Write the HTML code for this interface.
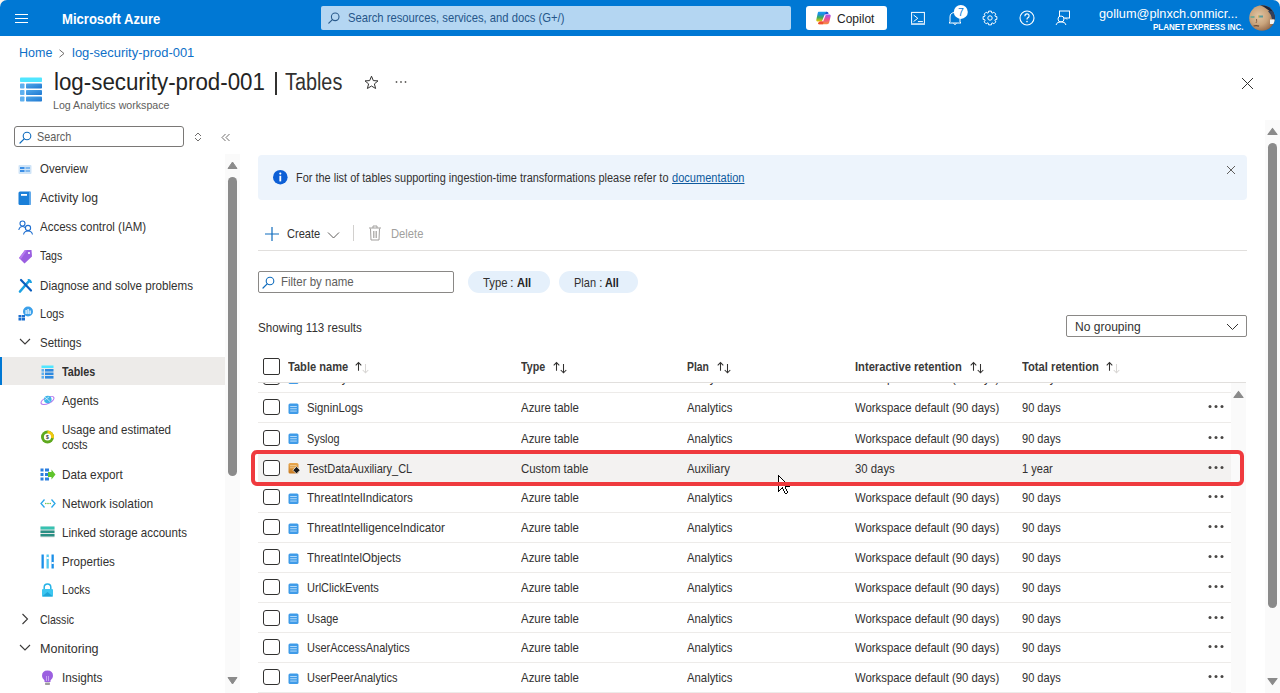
<!DOCTYPE html>
<html><head><meta charset="utf-8"><title>Tables - Microsoft Azure</title>
<style>
html,body{margin:0;padding:0;width:1280px;height:693px;overflow:hidden;background:#fff;}
body{position:relative;font-family:"Liberation Sans",sans-serif;}
.a{position:absolute;display:block;}
.t{position:absolute;white-space:nowrap;font-family:"Liberation Sans",sans-serif;}
svg{overflow:visible;}
</style></head><body>
<div class="a" style="left:0px;top:0px;width:12px;height:12px;background:#fcf6ee;"></div>
<div class="a" style="left:1268px;top:0px;width:12px;height:12px;background:#fcf6ee;"></div>
<div class="a" style="left:0px;top:0px;width:1280px;height:36px;background:#0078d4;border-radius:7px 7px 0 0;"></div>
<div class="a" style="left:15px;top:14px;width:13px;height:1.2px;background:#ffffff;"></div>
<div class="a" style="left:15px;top:18px;width:13px;height:1.2px;background:#ffffff;"></div>
<div class="a" style="left:15px;top:22px;width:13px;height:1.2px;background:#ffffff;"></div>
<div class="t" style="left:61.70px;top:10.15px;font-size:14px;line-height:18px;color:#ffffff;transform:scaleX(0.9338);transform-origin:0 0;font-weight:700;">Microsoft Azure</div>
<div class="a" style="left:321px;top:6px;width:470px;height:24px;background:#b4d6f2;border-radius:2px;"></div>
<svg class="a" style="left:328px;top:12px;" width="12" height="12" viewBox="0 0 12 12"><circle cx="7.2" cy="4.8" r="3.8" fill="none" stroke="#2b5b8c" stroke-width="1.1"/><line x1="4.4" y1="7.6" x2="0.8" y2="11.2" stroke="#2b5b8c" stroke-width="1.2" stroke-linecap="round"/></svg>
<div class="t" style="left:348.00px;top:10.00px;font-size:13px;line-height:16px;color:#26568a;transform:scaleX(0.8644);transform-origin:0 0;">Search resources, services, and docs (G+/)</div>
<div class="a" style="left:806px;top:6px;width:81px;height:24px;background:#ffffff;border-radius:3px;"></div>
<svg class="a" style="left:815px;top:11px;" width="17" height="14" viewBox="0 0 17 14"><defs><linearGradient id="cgL" x1="0" y1="0" x2="0" y2="1"><stop offset="0" stop-color="#1aa3f2"/><stop offset="0.25" stop-color="#1a8de0"/><stop offset="0.6" stop-color="#3fae5a"/><stop offset="1" stop-color="#f1c500"/></linearGradient><linearGradient id="cgR" x1="0" y1="0" x2="0" y2="1"><stop offset="0" stop-color="#a154f2"/><stop offset="0.5" stop-color="#f0508c"/><stop offset="1" stop-color="#f7913c"/></linearGradient></defs><path d="M3.6 0.8 L11.8 0.8 Q13.2 0.8 13.6 2.6 L10.2 3.2 L7.4 10.4 L2.4 10.4 Q1 10.4 1.3 8.8 L2.7 2.2 Q3 0.8 3.6 0.8 Z" fill="url(#cgL)"/><path d="M11.5 0.8 Q13.2 0.8 13.6 2.6 L9.5 3.4 Z" fill="#1b4fd0"/><path d="M9.4 3.5 L14.6 3.5 Q16 3.5 15.7 5 L14.2 11.5 Q13.8 13.2 12.2 13.2 L4.2 13.2 Q2.6 13.2 3.2 12 L4.8 10.4 L7.2 10.4 Z" fill="url(#cgR)"/><path d="M4.2 13.2 Q2.6 13.2 3.2 12 L4.8 10.4 L8.5 10.4 L8 13.2 Z" fill="#ef5030"/><path d="M10.3 3.6 L7.6 10.3" stroke="#fff" stroke-width="1.1"/></svg>
<div class="t" style="left:837.00px;top:11.10px;font-size:13px;line-height:16px;color:#242424;transform:scaleX(0.9242);transform-origin:0 0;">Copilot</div>
<svg class="a" style="left:910px;top:11px;" width="16" height="15" viewBox="0 0 16 15"><rect x="1.6" y="1.4" width="12.8" height="11.8" fill="none" stroke="#fff" stroke-width="1"/><rect x="1.1" y="12.2" width="13.8" height="1.6" fill="#bcdcf5"/><path d="M3.9 4.3 L7.8 7.3 L3.9 10.3" fill="none" stroke="#fff" stroke-width="1" stroke-linecap="round"/><line x1="8.3" y1="10.6" x2="12.5" y2="10.6" stroke="#fff" stroke-width="1" stroke-linecap="round"/></svg>
<svg class="a" style="left:947px;top:10px;" width="16" height="16" viewBox="0 0 16 16"><path d="M3 12 L3 7 Q3 2.5 8 2.5 Q13 2.5 13 7 L13 12 L14 13 L2 13 Z" fill="none" stroke="#fff" stroke-width="1"/><path d="M6.5 13.5 Q8 15.5 9.5 13.5" fill="none" stroke="#fff" stroke-width="1"/></svg>
<svg class="a" style="left:953px;top:4px;" width="16" height="16" viewBox="0 0 16 16"><circle cx="7.8" cy="7.9" r="7" fill="#fff"/><text x="7.8" y="11.8" text-anchor="middle" font-family="Liberation Sans" font-size="10.5" fill="#0078d4">7</text></svg>
<svg class="a" style="left:982px;top:10px;" width="16" height="16" viewBox="0 0 16 16"><path d="M12.96 6.13 L14.86 6.61 L14.86 9.39 L12.96 9.87 L12.83 10.19 L13.83 11.87 L11.87 13.83 L10.19 12.83 L9.87 12.96 L9.39 14.86 L6.61 14.86 L6.13 12.96 L5.81 12.83 L4.13 13.83 L2.17 11.87 L3.17 10.19 L3.04 9.87 L1.14 9.39 L1.14 6.61 L3.04 6.13 L3.17 5.81 L2.17 4.13 L4.13 2.17 L5.81 3.17 L6.13 3.04 L6.61 1.14 L9.39 1.14 L9.87 3.04 L10.19 3.17 L11.87 2.17 L13.83 4.13 L12.83 5.81 Z" fill="none" stroke="#fff" stroke-width="1" stroke-linejoin="round"/><circle cx="8" cy="8" r="2.2" fill="none" stroke="#fff" stroke-width="1"/></svg>
<svg class="a" style="left:1019px;top:10px;" width="16" height="16" viewBox="0 0 16 16"><circle cx="8" cy="8" r="7" fill="none" stroke="#fff" stroke-width="1.1"/><path d="M5.9 6.2 Q5.9 3.9 8 3.9 Q10.1 3.9 10.1 5.9 Q10.1 7.1 8.6 7.9 Q8 8.3 8 9.4" fill="none" stroke="#fff" stroke-width="1.1"/><circle cx="8" cy="11.6" r="0.8" fill="#fff"/></svg>
<svg class="a" style="left:1055px;top:10px;" width="16" height="16" viewBox="0 0 16 16"><rect x="4.5" y="1" width="10" height="7" fill="none" stroke="#fff" stroke-width="1"/><circle cx="6" cy="9" r="3" fill="#0078d4" stroke="#fff" stroke-width="1"/><path d="M1 15 Q1.5 11.8 6 11.8 Q10.5 11.8 11 15" fill="none" stroke="#fff" stroke-width="1"/><path d="M10.5 8 L12 9.5" stroke="#fff" stroke-width="1"/></svg>
<div class="t" style="left:1098.90px;top:6.07px;font-size:12.5px;line-height:16px;color:#ffffff;transform:scaleX(1.0180);transform-origin:0 0;">gollum@plnxch.onmicr...</div>
<div class="t" style="left:1153.00px;top:22.38px;font-size:9px;line-height:11px;color:#ffffff;transform:scaleX(0.8924);transform-origin:0 0;font-weight:700;">PLANET EXPRESS INC.</div>
<svg class="a" style="left:1249px;top:5px;" width="26" height="26" viewBox="0 0 26 26"><defs><clipPath id="avc"><circle cx="13" cy="13" r="12.8"/></clipPath><radialGradient id="av" cx="0.38" cy="0.42" r="0.7"><stop offset="0" stop-color="#e2c6a4"/><stop offset="0.5" stop-color="#c9a47c"/><stop offset="0.85" stop-color="#9a7050"/><stop offset="1" stop-color="#4a3424"/></radialGradient></defs><g clip-path="url(#avc)"><rect x="0" y="0" width="26" height="26" fill="url(#av)"/><path d="M11 0 L26 0 L26 17 Q24 10 20 5.5 Q16 2 11 0 Z" fill="#1e2438"/><path d="M19 6 Q22 9 23 14 L26 14 L26 6 Z" fill="#33405a"/><rect x="21" y="14.5" width="5" height="4.5" fill="#eef4f6"/><path d="M0 20 Q3 25 8 26 L0 26 Z" fill="#2a2430"/><rect x="1.5" y="11" width="4" height="2" fill="#78a890"/><rect x="9.5" y="10.5" width="4.5" height="2" fill="#5a9a98"/><rect x="9.3" y="10.5" width="1" height="2" fill="#e8b040"/><path d="M4.5 21 Q7.5 20 10 21.2" stroke="#6a4a34" stroke-width="1.3" fill="none"/><path d="M7.5 14 Q8 17 7 18" stroke="#8a6448" stroke-width="1" fill="none"/></g></svg>
<div class="t" style="left:18.50px;top:45.10px;font-size:13px;line-height:16px;color:#0e6fc7;transform:scaleX(0.9632);transform-origin:0 0;">Home</div>
<svg class="a" style="left:58px;top:49px;" width="8" height="9" viewBox="0 0 8 9"><path d="M1.5 0.8 L6 4.5 L1.5 8.2" fill="none" stroke="#605e5c" stroke-width="0.9"/></svg>
<div class="t" style="left:72.10px;top:45.10px;font-size:13px;line-height:16px;color:#0e6fc7;transform:scaleX(0.9957);transform-origin:0 0;">log-security-prod-001</div>
<svg class="a" style="left:19px;top:77px;" width="24" height="25" viewBox="0 0 24 25"><defs><linearGradient id="tg" x1="0" y1="0" x2="1" y2="1"><stop offset="0" stop-color="#4fa8ea"/><stop offset="1" stop-color="#1f78d1"/></linearGradient></defs><rect x="1" y="0.5" width="22" height="4.5" rx="0.8" fill="#50e6ff"/><rect x="1" y="6.5" width="4.5" height="5" rx="0.8" fill="#5eb0ef"/><rect x="7" y="6.5" width="16" height="5" rx="0.8" fill="url(#tg)"/><rect x="1" y="13" width="4.5" height="5" rx="0.8" fill="#5eb0ef"/><rect x="7" y="13" width="16" height="5" rx="0.8" fill="url(#tg)"/><rect x="1" y="19.5" width="4.5" height="5" rx="0.8" fill="#5eb0ef"/><rect x="7" y="19.5" width="16" height="5" rx="0.8" fill="url(#tg)"/></svg>
<div class="t" style="left:53.60px;top:66.83px;font-size:23px;line-height:30px;color:#242424;transform:scaleX(0.9705);transform-origin:0 0;">log-security-prod-001</div>
<div class="a" style="left:275px;top:72px;width:1.6px;height:22.5px;background:#323130;"></div>
<div class="t" style="left:285.00px;top:66.83px;font-size:23px;line-height:30px;color:#323130;transform:scaleX(0.8619);transform-origin:0 0;">Tables</div>
<div class="t" style="left:52.60px;top:97.59px;font-size:11px;line-height:14px;color:#605e5c;transform:scaleX(0.9672);transform-origin:0 0;">Log Analytics workspace</div>
<svg class="a" style="left:364px;top:75px;" width="15" height="15" viewBox="0 0 15 15"><path d="M7.5 1.2 L9.3 5.6 L14 5.9 L10.4 8.9 L11.6 13.5 L7.5 11 L3.4 13.5 L4.6 8.9 L1 5.9 L5.7 5.6 Z" fill="none" stroke="#323130" stroke-width="1" stroke-linejoin="round"/></svg>
<svg class="a" style="left:395px;top:80px;" width="12" height="4" viewBox="0 0 12 4"><circle cx="1.5" cy="2" r="0.9" fill="#605e5c"/><circle cx="6" cy="2" r="0.9" fill="#605e5c"/><circle cx="10.5" cy="2" r="0.9" fill="#605e5c"/></svg>
<svg class="a" style="left:1241px;top:76.5px;" width="13" height="13" viewBox="0 0 13 13"><path d="M1 1 L12 12 M12 1 L1 12" stroke="#323130" stroke-width="1"/></svg>
<div class="a" style="left:14.3px;top:126.3px;width:169.3px;height:21px;background:#fff;border:1px solid #7a7876;border-radius:3px;box-sizing:border-box;"></div>
<svg class="a" style="left:19px;top:131px;" width="13" height="13" viewBox="0 0 13 13"><circle cx="8" cy="5" r="3.8" fill="none" stroke="#0f6cbd" stroke-width="1.1"/><line x1="5.2" y1="7.8" x2="1" y2="12" stroke="#0f6cbd" stroke-width="1.2" stroke-linecap="round"/></svg>
<div class="t" style="left:37.10px;top:128.90px;font-size:13px;line-height:16px;color:#605e5c;transform:scaleX(0.8327);transform-origin:0 0;">Search</div>
<svg class="a" style="left:194px;top:132px;" width="8" height="10" viewBox="0 0 8 10"><path d="M1 4 L4 1 L7 4 M1 6 L4 9 L7 6" fill="none" stroke="#605e5c" stroke-width="0.9"/></svg>
<svg class="a" style="left:221px;top:133px;" width="10" height="9" viewBox="0 0 10 9"><path d="M4.5 1 L1 4.5 L4.5 8 M8.5 1 L5 4.5 L8.5 8" fill="none" stroke="#605e5c" stroke-width="0.9"/></svg>
<div class="a" style="left:0px;top:357px;width:225px;height:28px;background:#edebe9;"></div>
<div class="a" style="left:0px;top:357px;width:2px;height:28px;background:#0078d4;"></div>
<div class="t" style="left:39.70px;top:161.30px;font-size:13px;line-height:16px;color:#323130;transform:scaleX(0.8805);transform-origin:0 0;">Overview</div>
<div class="t" style="left:39.70px;top:190.00px;font-size:13px;line-height:16px;color:#323130;transform:scaleX(0.9335);transform-origin:0 0;">Activity log</div>
<div class="t" style="left:39.70px;top:219.20px;font-size:13px;line-height:16px;color:#323130;transform:scaleX(0.8857);transform-origin:0 0;">Access control (IAM)</div>
<div class="t" style="left:39.70px;top:248.30px;font-size:13px;line-height:16px;color:#323130;transform:scaleX(0.8085);transform-origin:0 0;">Tags</div>
<div class="t" style="left:39.70px;top:278.10px;font-size:13px;line-height:16px;color:#323130;transform:scaleX(0.8934);transform-origin:0 0;">Diagnose and solve problems</div>
<div class="t" style="left:39.70px;top:305.80px;font-size:13px;line-height:16px;color:#323130;transform:scaleX(0.8478);transform-origin:0 0;">Logs</div>
<div class="t" style="left:39.70px;top:335.40px;font-size:13px;line-height:16px;color:#323130;transform:scaleX(0.8814);transform-origin:0 0;">Settings</div>
<div class="t" style="left:61.70px;top:363.60px;font-size:13px;line-height:16px;color:#323130;transform:scaleX(0.8280);transform-origin:0 0;font-weight:700;">Tables</div>
<div class="t" style="left:61.70px;top:392.90px;font-size:13px;line-height:16px;color:#323130;transform:scaleX(0.9068);transform-origin:0 0;">Agents</div>
<div class="t" style="left:61.70px;top:421.60px;font-size:13px;line-height:16px;color:#323130;transform:scaleX(0.8873);transform-origin:0 0;">Usage and estimated</div>
<div class="t" style="left:61.70px;top:437.30px;font-size:13px;line-height:16px;color:#323130;transform:scaleX(0.8437);transform-origin:0 0;">costs</div>
<div class="t" style="left:61.70px;top:467.00px;font-size:13px;line-height:16px;color:#323130;transform:scaleX(0.9048);transform-origin:0 0;">Data export</div>
<div class="t" style="left:61.70px;top:495.90px;font-size:13px;line-height:16px;color:#323130;transform:scaleX(0.9214);transform-origin:0 0;">Network isolation</div>
<div class="t" style="left:61.70px;top:524.50px;font-size:13px;line-height:16px;color:#323130;transform:scaleX(0.8863);transform-origin:0 0;">Linked storage accounts</div>
<div class="t" style="left:61.70px;top:553.60px;font-size:13px;line-height:16px;color:#323130;transform:scaleX(0.8929);transform-origin:0 0;">Properties</div>
<div class="t" style="left:61.70px;top:581.60px;font-size:13px;line-height:16px;color:#323130;transform:scaleX(0.8245);transform-origin:0 0;">Locks</div>
<div class="t" style="left:39.70px;top:611.90px;font-size:13px;line-height:16px;color:#323130;transform:scaleX(0.8116);transform-origin:0 0;">Classic</div>
<div class="t" style="left:39.70px;top:640.80px;font-size:13px;line-height:16px;color:#323130;transform:scaleX(0.9655);transform-origin:0 0;">Monitoring</div>
<div class="t" style="left:61.70px;top:669.50px;font-size:13px;line-height:16px;color:#323130;transform:scaleX(0.9040);transform-origin:0 0;">Insights</div>
<svg class="a" style="left:18px;top:164px;" width="14" height="11" viewBox="0 0 14 11"><rect x="0.5" y="1" width="13" height="9" rx="1" fill="#cfe4f7"/><rect x="2" y="3" width="4.5" height="2" fill="#3a8ee6"/><rect x="2" y="6" width="4.5" height="2" fill="#3a8ee6"/><rect x="7.5" y="3" width="4.5" height="2" fill="#7fb8ef"/><rect x="7.5" y="6" width="4.5" height="2" fill="#7fb8ef"/></svg>
<svg class="a" style="left:18px;top:191px;" width="14" height="15" viewBox="0 0 14 15"><rect x="0.5" y="0.5" width="12" height="13.5" rx="1.5" fill="#1a7fd8"/><rect x="3" y="3" width="6" height="1.8" fill="#fff"/><rect x="11" y="0.5" width="1.8" height="13.5" fill="#5aa6ea"/></svg>
<svg class="a" style="left:18px;top:220px;" width="16" height="15" viewBox="0 0 16 15"><circle cx="4.5" cy="3.5" r="2.5" fill="none" stroke="#1f6fd0" stroke-width="1.1"/><path d="M0.8 10 Q1.5 6.5 4.5 6.5 Q6 6.5 7 7.5" fill="none" stroke="#1f6fd0" stroke-width="1.1"/><circle cx="10" cy="8" r="2.6" fill="none" stroke="#1f6fd0" stroke-width="1.1"/><path d="M5.5 14.5 Q6.2 11 10 11 Q13.8 11 14.5 14.5" fill="none" stroke="#1f6fd0" stroke-width="1.1"/></svg>
<svg class="a" style="left:18px;top:249px;" width="15" height="15" viewBox="0 0 15 15"><path d="M7 1 L13.5 1 L14 7.5 L6.5 14.5 L1 9 Z" fill="#9a5ee0"/><path d="M1 9 L7 1 L9 1 L3 10 Z" fill="#b77af0"/><circle cx="11" cy="4" r="1.1" fill="#fff"/></svg>
<svg class="a" style="left:18px;top:278px;" width="15" height="15" viewBox="0 0 15 15"><path d="M2 13.5 L11 3" stroke="#1ba1e2" stroke-width="2.6" stroke-linecap="round"/><path d="M3 2 L13 12.5" stroke="#0a5dbd" stroke-width="2.2" stroke-linecap="round"/><path d="M9.5 1 Q13.5 0.5 14 5 L12 5 L10.5 3.5 Z" fill="#1ba1e2"/></svg>
<svg class="a" style="left:18px;top:306px;" width="15" height="15" viewBox="0 0 15 15"><circle cx="10" cy="5.5" r="5" fill="#3ba0ea"/><rect x="7.5" y="4" width="1.2" height="4" fill="#fff"/><rect x="9.5" y="3" width="1.2" height="5" fill="#fff"/><rect x="11.5" y="4.5" width="1.2" height="3.5" fill="#fff"/><rect x="0.5" y="9" width="3" height="2.5" fill="#1b6fd0"/><rect x="4" y="9" width="3" height="2.5" fill="#1b6fd0"/><rect x="0.5" y="12" width="3" height="2.5" fill="#1b6fd0"/><rect x="4" y="12" width="3" height="2.5" fill="#1b6fd0"/></svg>
<svg class="a" style="left:19px;top:338px;" width="12" height="8" viewBox="0 0 12 8"><path d="M1 1 L6 6 L11 1" fill="none" stroke="#3b3a39" stroke-width="1.1"/></svg>
<svg class="a" style="left:41px;top:365px;" width="13" height="14" viewBox="0 0 13 14"><rect x="0.5" y="0.5" width="12" height="2.5" fill="#50e6ff"/><rect x="0.5" y="4" width="2.5" height="2.6" fill="#5eb0ef"/><rect x="4" y="4" width="8.5" height="2.6" fill="#2f8ae0"/><rect x="0.5" y="7.5" width="2.5" height="2.6" fill="#5eb0ef"/><rect x="4" y="7.5" width="8.5" height="2.6" fill="#2f8ae0"/><rect x="0.5" y="11" width="2.5" height="2.6" fill="#5eb0ef"/><rect x="4" y="11" width="8.5" height="2.6" fill="#2f8ae0"/></svg>
<svg class="a" style="left:40px;top:393px;" width="15" height="14" viewBox="0 0 15 14"><ellipse cx="7.5" cy="7.5" rx="7" ry="3" fill="none" stroke="#b77af0" stroke-width="1.2" transform="rotate(-25 7.5 7.5)"/><circle cx="7.8" cy="6.5" r="3.8" fill="#3fb5e8"/><path d="M5 4 L10.5 9 M4.5 7 L9 4" stroke="#fff" stroke-width="0.6"/></svg>
<svg class="a" style="left:40px;top:429px;" width="15" height="16" viewBox="0 0 15 16"><circle cx="7.5" cy="8" r="6.5" fill="#5ea91e"/><path d="M7.5 1.5 A6.5 6.5 0 0 1 13.8 9.5 L7.5 8 Z" fill="#f2c80f"/><circle cx="7.5" cy="8" r="3.6" fill="#fff"/><text x="7.5" y="10" text-anchor="middle" font-family="Liberation Sans" font-size="5" font-weight="700" fill="#333">$</text></svg>
<svg class="a" style="left:40px;top:468px;" width="16" height="13" viewBox="0 0 16 13"><rect x="0.5" y="0.5" width="3" height="3" fill="#2b7fe0"/><rect x="5" y="0.5" width="4" height="3" fill="#2b7fe0"/><rect x="0.5" y="5" width="3" height="3" fill="#2b7fe0"/><rect x="5" y="5" width="4" height="3" fill="#2b7fe0"/><rect x="0.5" y="9.5" width="3" height="3" fill="#2b7fe0"/><rect x="5" y="9.5" width="4" height="3" fill="#2b7fe0"/><path d="M8 4 L11.5 4 L11.5 1.5 L15.5 6.5 L11.5 11.5 L11.5 9 L8 9 Z" fill="#5fc42b"/></svg>
<svg class="a" style="left:40px;top:498px;" width="16" height="11" viewBox="0 0 16 11"><path d="M4.5 1.5 L1 5.5 L4.5 9.5" fill="none" stroke="#2aa7e8" stroke-width="1.3"/><path d="M11.5 1.5 L15 5.5 L11.5 9.5" fill="none" stroke="#2aa7e8" stroke-width="1.3"/><circle cx="5.8" cy="5.5" r="0.8" fill="#6cc04a"/><circle cx="8" cy="5.5" r="0.8" fill="#6cc04a"/><circle cx="10.2" cy="5.5" r="0.8" fill="#6cc04a"/></svg>
<svg class="a" style="left:40px;top:526px;" width="15" height="12" viewBox="0 0 15 12"><rect x="0.5" y="0.5" width="14" height="11" fill="#e6e6e6"/><rect x="0.5" y="0.5" width="14" height="3" fill="#37c2b1"/><rect x="0.5" y="4.5" width="14" height="2.5" fill="#2a8f84"/><rect x="0.5" y="8" width="14" height="2.5" fill="#2a8f84"/></svg>
<svg class="a" style="left:41px;top:554px;" width="14" height="15" viewBox="0 0 14 15"><rect x="0.5" y="0.5" width="2.3" height="14" fill="#1b8fe8"/><rect x="5.5" y="0.5" width="2.3" height="14" fill="#50c8f0"/><rect x="10.5" y="0.5" width="2.3" height="14" fill="#1b8fe8"/><rect x="5.5" y="3" width="2.3" height="2" fill="#fff"/><rect x="10.5" y="8" width="2.3" height="2" fill="#fff"/></svg>
<svg class="a" style="left:41px;top:583px;" width="13" height="14" viewBox="0 0 13 14"><path d="M3.2 6 L3.2 4.3 Q3.2 1 6.5 1 Q9.8 1 9.8 4.3 L9.8 6" fill="none" stroke="#25b2e6" stroke-width="1.5"/><rect x="1" y="6" width="11" height="7.5" rx="1" fill="#3cc6f0"/><path d="M1 13.5 L6.5 9 L12 13.5 Z" fill="#1ea5d8"/></svg>
<svg class="a" style="left:21px;top:613px;" width="8" height="12" viewBox="0 0 8 12"><path d="M1.5 1 L6.5 6 L1.5 11" fill="none" stroke="#3b3a39" stroke-width="1.1"/></svg>
<svg class="a" style="left:19px;top:644px;" width="12" height="8" viewBox="0 0 12 8"><path d="M1 1 L6 6 L11 1" fill="none" stroke="#3b3a39" stroke-width="1.1"/></svg>
<svg class="a" style="left:41px;top:670px;" width="13" height="16" viewBox="0 0 13 16"><path d="M6.5 0.5 Q12 0.5 12 6 Q12 8.5 9.5 10.5 L9.5 12 L3.5 12 L3.5 10.5 Q1 8.5 1 6 Q1 0.5 6.5 0.5 Z" fill="#9b5fe0"/><rect x="4" y="12.5" width="5" height="2.5" rx="0.8" fill="#9e9e9e"/><path d="M5.5 11 L5.5 6 M7.5 11 L7.5 6" stroke="#d8c0f8" stroke-width="0.7"/></svg>
<div class="a" style="left:225px;top:154px;width:15px;height:539px;background:#fafafa;"></div>
<svg class="a" style="left:227px;top:161px;" width="11" height="8" viewBox="0 0 11 8"><path d="M1 7.5 L5.5 1 L10 7.5 Z" fill="#8a8a8a" stroke="#8a8a8a" stroke-width="1" stroke-linejoin="round"/></svg>
<div class="a" style="left:228px;top:177px;width:9px;height:299px;background:#8a8a8a;border-radius:4.5px;"></div>
<svg class="a" style="left:227px;top:677px;" width="11" height="8" viewBox="0 0 11 8"><path d="M1 0.5 L5.5 7 L10 0.5 Z" fill="#8a8a8a" stroke="#8a8a8a" stroke-width="1" stroke-linejoin="round"/></svg>
<div class="a" style="left:258px;top:155px;width:989px;height:44.5px;background:#edf4fc;border-radius:4px;"></div>
<svg class="a" style="left:272px;top:169px;" width="16" height="16" viewBox="0 0 16 16"><circle cx="8.3" cy="8.2" r="7.3" fill="#0d5fd6"/><rect x="7.4" y="6.8" width="1.8" height="5.6" fill="#fff"/><circle cx="8.3" cy="4.6" r="1.1" fill="#fff"/></svg>
<div class="t" style="left:295.60px;top:170.74px;font-size:12px;line-height:15px;color:#323130;transform:scaleX(0.9125);transform-origin:0 0;">For the list of tables supporting ingestion-time transformations please refer to</div>
<div class="t" style="left:671.50px;top:170.74px;font-size:12px;line-height:15px;color:#0e5a9e;transform:scaleX(0.9209);transform-origin:0 0;text-decoration:underline;">documentation</div>
<svg class="a" style="left:1226px;top:165px;" width="10" height="10" viewBox="0 0 10 10"><path d="M1 1 L9 9 M9 1 L1 9" stroke="#605e5c" stroke-width="1"/></svg>
<svg class="a" style="left:264px;top:226px;" width="16" height="16" viewBox="0 0 16 16"><path d="M8 1 L8 15 M1 8 L15 8" stroke="#0f6cbd" stroke-width="1.2"/></svg>
<div class="t" style="left:287.30px;top:226.40px;font-size:13px;line-height:16px;color:#323130;transform:scaleX(0.8509);transform-origin:0 0;">Create</div>
<svg class="a" style="left:327px;top:231px;" width="13" height="9" viewBox="0 0 13 9"><path d="M1 1.5 L6.5 7 L12 1.5" fill="none" stroke="#605e5c" stroke-width="1"/></svg>
<div class="a" style="left:353px;top:225px;width:1px;height:16px;background:#d2d0ce;"></div>
<svg class="a" style="left:368px;top:225px;" width="14" height="16" viewBox="0 0 14 16"><path d="M1 3 L13 3 M5 3 L5 1 L9 1 L9 3" fill="none" stroke="#a19f9d" stroke-width="1"/><path d="M2.5 3.5 L3 15 L11 15 L11.5 3.5" fill="none" stroke="#a19f9d" stroke-width="1"/><path d="M5.5 6 L5.5 13 M7 6 L7 13 M8.5 6 L8.5 13" stroke="#a19f9d" stroke-width="0.8"/></svg>
<div class="t" style="left:390.70px;top:226.40px;font-size:13px;line-height:16px;color:#a19f9d;transform:scaleX(0.8622);transform-origin:0 0;">Delete</div>
<div class="a" style="left:258px;top:250px;width:989px;height:1px;background:#e1dfdd;"></div>
<div class="a" style="left:258px;top:271px;width:196px;height:22px;background:#fff;border:1px solid #8a8886;border-radius:2px;box-sizing:border-box;"></div>
<svg class="a" style="left:262px;top:276px;" width="13" height="13" viewBox="0 0 13 13"><circle cx="8" cy="5" r="3.8" fill="none" stroke="#0f6cbd" stroke-width="1.1"/><line x1="5.2" y1="7.8" x2="1" y2="12" stroke="#0f6cbd" stroke-width="1.2" stroke-linecap="round"/></svg>
<div class="t" style="left:281.30px;top:273.70px;font-size:13px;line-height:16px;color:#605e5c;transform:scaleX(0.8827);transform-origin:0 0;">Filter by name</div>
<div class="a" style="left:468px;top:271px;width:82px;height:22px;background:#e5f0fb;border-radius:11px;"></div>
<div class="t" style="left:483.10px;top:274.80px;font-size:13px;line-height:16px;color:#323130;transform:scaleX(0.8693);transform-origin:0 0;">Type</div>
<div class="t" style="left:510.00px;top:274.80px;font-size:13px;line-height:16px;color:#323130;transform:scaleX(0.9968);transform-origin:0 0;">:</div>
<div class="t" style="left:517.00px;top:274.80px;font-size:13px;line-height:16px;color:#242424;transform:scaleX(0.8488);transform-origin:0 0;font-weight:700;">All</div>
<div class="a" style="left:559px;top:271px;width:79px;height:22px;background:#e5f0fb;border-radius:11px;"></div>
<div class="t" style="left:574.20px;top:274.80px;font-size:13px;line-height:16px;color:#323130;transform:scaleX(0.8455);transform-origin:0 0;">Plan</div>
<div class="t" style="left:598.50px;top:274.80px;font-size:13px;line-height:16px;color:#323130;transform:scaleX(0.9968);transform-origin:0 0;">:</div>
<div class="t" style="left:605.20px;top:274.80px;font-size:13px;line-height:16px;color:#242424;transform:scaleX(0.8307);transform-origin:0 0;font-weight:700;">All</div>
<div class="t" style="left:257.80px;top:320.00px;font-size:13px;line-height:16px;color:#323130;transform:scaleX(0.8940);transform-origin:0 0;">Showing 113 results</div>
<div class="a" style="left:1066px;top:315px;width:181px;height:22px;background:#fff;border:1px solid #8a8886;border-radius:2px;box-sizing:border-box;"></div>
<div class="t" style="left:1074.60px;top:319.00px;font-size:13px;line-height:16px;color:#323130;transform:scaleX(0.9262);transform-origin:0 0;">No grouping</div>
<svg class="a" style="left:1226px;top:323px;" width="13" height="8" viewBox="0 0 13 8"><path d="M1 1 L6.5 6.5 L12 1" fill="none" stroke="#323130" stroke-width="1"/></svg>
<div class="a" style="left:263.3px;top:358.1px;width:16.4px;height:16.6px;background:#fff;border:1px solid #323130;border-radius:2px;box-sizing:border-box;"></div>
<div class="t" style="left:287.50px;top:358.70px;font-size:13px;line-height:16px;color:#3a3938;transform:scaleX(0.8532);transform-origin:0 0;font-weight:700;">Table name</div>
<svg class="a" style="left:354.5px;top:362px;" width="16" height="12" viewBox="0 0 16 12"><path d="M3.5 8.8 L3.5 0.6 M0.7 3.4 L3.5 0.6 L6.3 3.4" fill="none" stroke="#323130" stroke-width="1.05"/><path d="M10.5 2 L10.5 10.8 M7.7 8 L10.5 10.8 L13.3 8" fill="none" stroke="#d8d6d4" stroke-width="1.05"/></svg>
<div class="t" style="left:520.90px;top:358.70px;font-size:13px;line-height:16px;color:#3a3938;transform:scaleX(0.8238);transform-origin:0 0;font-weight:700;">Type</div>
<svg class="a" style="left:553px;top:362px;" width="16" height="12" viewBox="0 0 16 12"><path d="M3.5 8.8 L3.5 0.6 M0.7 3.4 L3.5 0.6 L6.3 3.4" fill="none" stroke="#323130" stroke-width="1.05"/><path d="M10.5 2 L10.5 10.8 M7.7 8 L10.5 10.8 L13.3 8" fill="none" stroke="#323130" stroke-width="1.05"/></svg>
<div class="t" style="left:687.30px;top:358.70px;font-size:13px;line-height:16px;color:#3a3938;transform:scaleX(0.7977);transform-origin:0 0;font-weight:700;">Plan</div>
<svg class="a" style="left:717px;top:362px;" width="16" height="12" viewBox="0 0 16 12"><path d="M3.5 8.8 L3.5 0.6 M0.7 3.4 L3.5 0.6 L6.3 3.4" fill="none" stroke="#323130" stroke-width="1.05"/><path d="M10.5 2 L10.5 10.8 M7.7 8 L10.5 10.8 L13.3 8" fill="none" stroke="#323130" stroke-width="1.05"/></svg>
<div class="t" style="left:855.20px;top:358.70px;font-size:13px;line-height:16px;color:#3a3938;transform:scaleX(0.8587);transform-origin:0 0;font-weight:700;">Interactive retention</div>
<svg class="a" style="left:970px;top:362px;" width="16" height="12" viewBox="0 0 16 12"><path d="M3.5 8.8 L3.5 0.6 M0.7 3.4 L3.5 0.6 L6.3 3.4" fill="none" stroke="#323130" stroke-width="1.05"/><path d="M10.5 2 L10.5 10.8 M7.7 8 L10.5 10.8 L13.3 8" fill="none" stroke="#323130" stroke-width="1.05"/></svg>
<div class="t" style="left:1021.60px;top:358.70px;font-size:13px;line-height:16px;color:#3a3938;transform:scaleX(0.8611);transform-origin:0 0;font-weight:700;">Total retention</div>
<svg class="a" style="left:1105.5px;top:362px;" width="16" height="12" viewBox="0 0 16 12"><path d="M3.5 8.8 L3.5 0.6 M0.7 3.4 L3.5 0.6 L6.3 3.4" fill="none" stroke="#323130" stroke-width="1.05"/><path d="M10.5 2 L10.5 10.8 M7.7 8 L10.5 10.8 L13.3 8" fill="none" stroke="#d8d6d4" stroke-width="1.05"/></svg>
<div class="a" style="left:258px;top:383px;width:988px;height:310px;overflow:hidden;">
<div class="a" style="left:0px;top:9.0px;width:973px;height:1px;background:#edebe9;"></div>
<div class="a" style="left:5.1px;top:-14.1px;width:16.8px;height:16px;background:#fff;border:1px solid #323130;border-radius:3px;box-sizing:border-box;"></div>
<svg class="a" style="left:30px;top:-10.5px;" width="11" height="11" viewBox="0 0 11 11"><rect x="0.5" y="0.5" width="10" height="10.5" rx="1.5" fill="#3f9be8"/><rect x="2.2" y="3" width="6.6" height="0.9" fill="#bfe0fb"/><rect x="2.2" y="5.3" width="6.6" height="0.9" fill="#bfe0fb"/><rect x="2.2" y="7.6" width="6.6" height="0.9" fill="#bfe0fb"/></svg>
<div class="t" style="left:48.50px;top:-13.10px;font-size:13px;line-height:16px;color:#323130;transform:scaleX(0.8600);transform-origin:0 0;">SecurityEvent</div>
<div class="t" style="left:262.90px;top:-13.10px;font-size:13px;line-height:16px;color:#323130;transform:scaleX(0.8800);transform-origin:0 0;">Azure table</div>
<div class="t" style="left:429.30px;top:-13.10px;font-size:13px;line-height:16px;color:#323130;transform:scaleX(0.8720);transform-origin:0 0;">Analytics</div>
<div class="t" style="left:597.20px;top:-13.10px;font-size:13px;line-height:16px;color:#323130;transform:scaleX(0.8730);transform-origin:0 0;">Workspace default (90 days)</div>
<div class="t" style="left:763.60px;top:-13.10px;font-size:13px;line-height:16px;color:#323130;transform:scaleX(0.8500);transform-origin:0 0;">90 days</div>
<svg class="a" style="left:950px;top:-8.7px;" width="16" height="5" viewBox="0 0 16 5"><circle cx="2" cy="2.5" r="1.5" fill="#484644"/><circle cx="8" cy="2.5" r="1.5" fill="#484644"/><circle cx="14" cy="2.5" r="1.5" fill="#484644"/></svg>
<div class="a" style="left:0px;top:39.0px;width:973px;height:1px;background:#edebe9;"></div>
<div class="a" style="left:5.1px;top:15.9px;width:16.8px;height:16px;background:#fff;border:1px solid #323130;border-radius:3px;box-sizing:border-box;"></div>
<svg class="a" style="left:30px;top:19.5px;" width="11" height="11" viewBox="0 0 11 11"><rect x="0.5" y="0.5" width="10" height="10.5" rx="1.5" fill="#3f9be8"/><rect x="2.2" y="3" width="6.6" height="0.9" fill="#bfe0fb"/><rect x="2.2" y="5.3" width="6.6" height="0.9" fill="#bfe0fb"/><rect x="2.2" y="7.6" width="6.6" height="0.9" fill="#bfe0fb"/></svg>
<div class="t" style="left:48.50px;top:16.90px;font-size:13px;line-height:16px;color:#323130;transform:scaleX(0.8706);transform-origin:0 0;">SigninLogs</div>
<div class="t" style="left:262.90px;top:16.90px;font-size:13px;line-height:16px;color:#323130;transform:scaleX(0.8800);transform-origin:0 0;">Azure table</div>
<div class="t" style="left:429.30px;top:16.90px;font-size:13px;line-height:16px;color:#323130;transform:scaleX(0.8720);transform-origin:0 0;">Analytics</div>
<div class="t" style="left:597.20px;top:16.90px;font-size:13px;line-height:16px;color:#323130;transform:scaleX(0.8730);transform-origin:0 0;">Workspace default (90 days)</div>
<div class="t" style="left:763.60px;top:16.90px;font-size:13px;line-height:16px;color:#323130;transform:scaleX(0.8500);transform-origin:0 0;">90 days</div>
<svg class="a" style="left:950px;top:21.3px;" width="16" height="5" viewBox="0 0 16 5"><circle cx="2" cy="2.5" r="1.5" fill="#484644"/><circle cx="8" cy="2.5" r="1.5" fill="#484644"/><circle cx="14" cy="2.5" r="1.5" fill="#484644"/></svg>
<div class="a" style="left:0px;top:69.0px;width:973px;height:1px;background:#edebe9;"></div>
<div class="a" style="left:5.1px;top:46.6px;width:16.8px;height:16px;background:#fff;border:1px solid #323130;border-radius:3px;box-sizing:border-box;"></div>
<svg class="a" style="left:30px;top:50.2px;" width="11" height="11" viewBox="0 0 11 11"><rect x="0.5" y="0.5" width="10" height="10.5" rx="1.5" fill="#3f9be8"/><rect x="2.2" y="3" width="6.6" height="0.9" fill="#bfe0fb"/><rect x="2.2" y="5.3" width="6.6" height="0.9" fill="#bfe0fb"/><rect x="2.2" y="7.6" width="6.6" height="0.9" fill="#bfe0fb"/></svg>
<div class="t" style="left:48.50px;top:47.60px;font-size:13px;line-height:16px;color:#323130;transform:scaleX(0.8329);transform-origin:0 0;">Syslog</div>
<div class="t" style="left:262.90px;top:47.60px;font-size:13px;line-height:16px;color:#323130;transform:scaleX(0.8800);transform-origin:0 0;">Azure table</div>
<div class="t" style="left:429.30px;top:47.60px;font-size:13px;line-height:16px;color:#323130;transform:scaleX(0.8720);transform-origin:0 0;">Analytics</div>
<div class="t" style="left:597.20px;top:47.60px;font-size:13px;line-height:16px;color:#323130;transform:scaleX(0.8730);transform-origin:0 0;">Workspace default (90 days)</div>
<div class="t" style="left:763.60px;top:47.60px;font-size:13px;line-height:16px;color:#323130;transform:scaleX(0.8500);transform-origin:0 0;">90 days</div>
<svg class="a" style="left:950px;top:52.0px;" width="16" height="5" viewBox="0 0 16 5"><circle cx="2" cy="2.5" r="1.5" fill="#484644"/><circle cx="8" cy="2.5" r="1.5" fill="#484644"/><circle cx="14" cy="2.5" r="1.5" fill="#484644"/></svg>
<div class="a" style="left:0px;top:69.5px;width:973px;height:30px;background:#f3f2f1;"></div>
<div class="a" style="left:0px;top:99.0px;width:973px;height:1px;background:#edebe9;"></div>
<div class="a" style="left:5.1px;top:76.9px;width:16.8px;height:16px;background:#fff;border:1px solid #323130;border-radius:3px;box-sizing:border-box;"></div>
<svg class="a" style="left:30px;top:79.0px;" width="13" height="13" viewBox="0 0 13 13"><defs><linearGradient id="og" x1="0" y1="0" x2="0" y2="1"><stop offset="0" stop-color="#e8a850"/><stop offset="1" stop-color="#c87a20"/></linearGradient></defs><rect x="0.5" y="1" width="10" height="10.6" rx="1.5" fill="url(#og)"/><rect x="2" y="3.3" width="6.5" height="0.9" fill="#f6d6a0"/><rect x="2" y="5.3" width="6.5" height="0.9" fill="#f0c888"/><path d="M8.5 4.6 L12.1 8.2 L8.5 11.8 L4.9 8.2 Z" fill="#1b1b1b" stroke="#fff" stroke-width="0.7"/></svg>
<div class="t" style="left:48.50px;top:77.90px;font-size:13px;line-height:16px;color:#323130;transform:scaleX(0.8465);transform-origin:0 0;">TestDataAuxiliary_CL</div>
<div class="t" style="left:262.90px;top:77.90px;font-size:13px;line-height:16px;color:#323130;transform:scaleX(0.8800);transform-origin:0 0;">Custom table</div>
<div class="t" style="left:429.30px;top:77.90px;font-size:13px;line-height:16px;color:#323130;transform:scaleX(0.8720);transform-origin:0 0;">Auxiliary</div>
<div class="t" style="left:597.20px;top:77.90px;font-size:13px;line-height:16px;color:#323130;transform:scaleX(0.8730);transform-origin:0 0;">30 days</div>
<div class="t" style="left:763.60px;top:77.90px;font-size:13px;line-height:16px;color:#323130;transform:scaleX(0.8500);transform-origin:0 0;">1 year</div>
<svg class="a" style="left:950px;top:82.3px;" width="16" height="5" viewBox="0 0 16 5"><circle cx="2" cy="2.5" r="1.5" fill="#484644"/><circle cx="8" cy="2.5" r="1.5" fill="#484644"/><circle cx="14" cy="2.5" r="1.5" fill="#484644"/></svg>
<div class="a" style="left:0px;top:129.0px;width:973px;height:1px;background:#edebe9;"></div>
<div class="a" style="left:5.1px;top:105.9px;width:16.8px;height:16px;background:#fff;border:1px solid #323130;border-radius:3px;box-sizing:border-box;"></div>
<svg class="a" style="left:30px;top:109.5px;" width="11" height="11" viewBox="0 0 11 11"><rect x="0.5" y="0.5" width="10" height="10.5" rx="1.5" fill="#3f9be8"/><rect x="2.2" y="3" width="6.6" height="0.9" fill="#bfe0fb"/><rect x="2.2" y="5.3" width="6.6" height="0.9" fill="#bfe0fb"/><rect x="2.2" y="7.6" width="6.6" height="0.9" fill="#bfe0fb"/></svg>
<div class="t" style="left:48.50px;top:106.90px;font-size:13px;line-height:16px;color:#323130;transform:scaleX(0.8937);transform-origin:0 0;">ThreatIntelIndicators</div>
<div class="t" style="left:262.90px;top:106.90px;font-size:13px;line-height:16px;color:#323130;transform:scaleX(0.8800);transform-origin:0 0;">Azure table</div>
<div class="t" style="left:429.30px;top:106.90px;font-size:13px;line-height:16px;color:#323130;transform:scaleX(0.8720);transform-origin:0 0;">Analytics</div>
<div class="t" style="left:597.20px;top:106.90px;font-size:13px;line-height:16px;color:#323130;transform:scaleX(0.8730);transform-origin:0 0;">Workspace default (90 days)</div>
<div class="t" style="left:763.60px;top:106.90px;font-size:13px;line-height:16px;color:#323130;transform:scaleX(0.8500);transform-origin:0 0;">90 days</div>
<svg class="a" style="left:950px;top:111.3px;" width="16" height="5" viewBox="0 0 16 5"><circle cx="2" cy="2.5" r="1.5" fill="#484644"/><circle cx="8" cy="2.5" r="1.5" fill="#484644"/><circle cx="14" cy="2.5" r="1.5" fill="#484644"/></svg>
<div class="a" style="left:0px;top:159.0px;width:973px;height:1px;background:#edebe9;"></div>
<div class="a" style="left:5.1px;top:135.9px;width:16.8px;height:16px;background:#fff;border:1px solid #323130;border-radius:3px;box-sizing:border-box;"></div>
<svg class="a" style="left:30px;top:139.5px;" width="11" height="11" viewBox="0 0 11 11"><rect x="0.5" y="0.5" width="10" height="10.5" rx="1.5" fill="#3f9be8"/><rect x="2.2" y="3" width="6.6" height="0.9" fill="#bfe0fb"/><rect x="2.2" y="5.3" width="6.6" height="0.9" fill="#bfe0fb"/><rect x="2.2" y="7.6" width="6.6" height="0.9" fill="#bfe0fb"/></svg>
<div class="t" style="left:48.50px;top:136.90px;font-size:13px;line-height:16px;color:#323130;transform:scaleX(0.9002);transform-origin:0 0;">ThreatIntelligenceIndicator</div>
<div class="t" style="left:262.90px;top:136.90px;font-size:13px;line-height:16px;color:#323130;transform:scaleX(0.8800);transform-origin:0 0;">Azure table</div>
<div class="t" style="left:429.30px;top:136.90px;font-size:13px;line-height:16px;color:#323130;transform:scaleX(0.8720);transform-origin:0 0;">Analytics</div>
<div class="t" style="left:597.20px;top:136.90px;font-size:13px;line-height:16px;color:#323130;transform:scaleX(0.8730);transform-origin:0 0;">Workspace default (90 days)</div>
<div class="t" style="left:763.60px;top:136.90px;font-size:13px;line-height:16px;color:#323130;transform:scaleX(0.8500);transform-origin:0 0;">90 days</div>
<svg class="a" style="left:950px;top:141.3px;" width="16" height="5" viewBox="0 0 16 5"><circle cx="2" cy="2.5" r="1.5" fill="#484644"/><circle cx="8" cy="2.5" r="1.5" fill="#484644"/><circle cx="14" cy="2.5" r="1.5" fill="#484644"/></svg>
<div class="a" style="left:0px;top:189.0px;width:973px;height:1px;background:#edebe9;"></div>
<div class="a" style="left:5.1px;top:165.9px;width:16.8px;height:16px;background:#fff;border:1px solid #323130;border-radius:3px;box-sizing:border-box;"></div>
<svg class="a" style="left:30px;top:169.5px;" width="11" height="11" viewBox="0 0 11 11"><rect x="0.5" y="0.5" width="10" height="10.5" rx="1.5" fill="#3f9be8"/><rect x="2.2" y="3" width="6.6" height="0.9" fill="#bfe0fb"/><rect x="2.2" y="5.3" width="6.6" height="0.9" fill="#bfe0fb"/><rect x="2.2" y="7.6" width="6.6" height="0.9" fill="#bfe0fb"/></svg>
<div class="t" style="left:48.50px;top:166.90px;font-size:13px;line-height:16px;color:#323130;transform:scaleX(0.8850);transform-origin:0 0;">ThreatIntelObjects</div>
<div class="t" style="left:262.90px;top:166.90px;font-size:13px;line-height:16px;color:#323130;transform:scaleX(0.8800);transform-origin:0 0;">Azure table</div>
<div class="t" style="left:429.30px;top:166.90px;font-size:13px;line-height:16px;color:#323130;transform:scaleX(0.8720);transform-origin:0 0;">Analytics</div>
<div class="t" style="left:597.20px;top:166.90px;font-size:13px;line-height:16px;color:#323130;transform:scaleX(0.8730);transform-origin:0 0;">Workspace default (90 days)</div>
<div class="t" style="left:763.60px;top:166.90px;font-size:13px;line-height:16px;color:#323130;transform:scaleX(0.8500);transform-origin:0 0;">90 days</div>
<svg class="a" style="left:950px;top:171.3px;" width="16" height="5" viewBox="0 0 16 5"><circle cx="2" cy="2.5" r="1.5" fill="#484644"/><circle cx="8" cy="2.5" r="1.5" fill="#484644"/><circle cx="14" cy="2.5" r="1.5" fill="#484644"/></svg>
<div class="a" style="left:0px;top:219.0px;width:973px;height:1px;background:#edebe9;"></div>
<div class="a" style="left:5.1px;top:195.9px;width:16.8px;height:16px;background:#fff;border:1px solid #323130;border-radius:3px;box-sizing:border-box;"></div>
<svg class="a" style="left:30px;top:199.5px;" width="11" height="11" viewBox="0 0 11 11"><rect x="0.5" y="0.5" width="10" height="10.5" rx="1.5" fill="#3f9be8"/><rect x="2.2" y="3" width="6.6" height="0.9" fill="#bfe0fb"/><rect x="2.2" y="5.3" width="6.6" height="0.9" fill="#bfe0fb"/><rect x="2.2" y="7.6" width="6.6" height="0.9" fill="#bfe0fb"/></svg>
<div class="t" style="left:48.50px;top:196.90px;font-size:13px;line-height:16px;color:#323130;transform:scaleX(0.8496);transform-origin:0 0;">UrlClickEvents</div>
<div class="t" style="left:262.90px;top:196.90px;font-size:13px;line-height:16px;color:#323130;transform:scaleX(0.8800);transform-origin:0 0;">Azure table</div>
<div class="t" style="left:429.30px;top:196.90px;font-size:13px;line-height:16px;color:#323130;transform:scaleX(0.8720);transform-origin:0 0;">Analytics</div>
<div class="t" style="left:597.20px;top:196.90px;font-size:13px;line-height:16px;color:#323130;transform:scaleX(0.8730);transform-origin:0 0;">Workspace default (90 days)</div>
<div class="t" style="left:763.60px;top:196.90px;font-size:13px;line-height:16px;color:#323130;transform:scaleX(0.8500);transform-origin:0 0;">90 days</div>
<svg class="a" style="left:950px;top:201.3px;" width="16" height="5" viewBox="0 0 16 5"><circle cx="2" cy="2.5" r="1.5" fill="#484644"/><circle cx="8" cy="2.5" r="1.5" fill="#484644"/><circle cx="14" cy="2.5" r="1.5" fill="#484644"/></svg>
<div class="a" style="left:0px;top:249.0px;width:973px;height:1px;background:#edebe9;"></div>
<div class="a" style="left:5.1px;top:226.8px;width:16.8px;height:16px;background:#fff;border:1px solid #323130;border-radius:3px;box-sizing:border-box;"></div>
<svg class="a" style="left:30px;top:230.4px;" width="11" height="11" viewBox="0 0 11 11"><rect x="0.5" y="0.5" width="10" height="10.5" rx="1.5" fill="#3f9be8"/><rect x="2.2" y="3" width="6.6" height="0.9" fill="#bfe0fb"/><rect x="2.2" y="5.3" width="6.6" height="0.9" fill="#bfe0fb"/><rect x="2.2" y="7.6" width="6.6" height="0.9" fill="#bfe0fb"/></svg>
<div class="t" style="left:48.50px;top:227.80px;font-size:13px;line-height:16px;color:#323130;transform:scaleX(0.8356);transform-origin:0 0;">Usage</div>
<div class="t" style="left:262.90px;top:227.80px;font-size:13px;line-height:16px;color:#323130;transform:scaleX(0.8800);transform-origin:0 0;">Azure table</div>
<div class="t" style="left:429.30px;top:227.80px;font-size:13px;line-height:16px;color:#323130;transform:scaleX(0.8720);transform-origin:0 0;">Analytics</div>
<div class="t" style="left:597.20px;top:227.80px;font-size:13px;line-height:16px;color:#323130;transform:scaleX(0.8730);transform-origin:0 0;">Workspace default (90 days)</div>
<div class="t" style="left:763.60px;top:227.80px;font-size:13px;line-height:16px;color:#323130;transform:scaleX(0.8500);transform-origin:0 0;">90 days</div>
<svg class="a" style="left:950px;top:232.20000000000002px;" width="16" height="5" viewBox="0 0 16 5"><circle cx="2" cy="2.5" r="1.5" fill="#484644"/><circle cx="8" cy="2.5" r="1.5" fill="#484644"/><circle cx="14" cy="2.5" r="1.5" fill="#484644"/></svg>
<div class="a" style="left:0px;top:279.0px;width:973px;height:1px;background:#edebe9;"></div>
<div class="a" style="left:5.1px;top:255.9px;width:16.8px;height:16px;background:#fff;border:1px solid #323130;border-radius:3px;box-sizing:border-box;"></div>
<svg class="a" style="left:30px;top:259.5px;" width="11" height="11" viewBox="0 0 11 11"><rect x="0.5" y="0.5" width="10" height="10.5" rx="1.5" fill="#3f9be8"/><rect x="2.2" y="3" width="6.6" height="0.9" fill="#bfe0fb"/><rect x="2.2" y="5.3" width="6.6" height="0.9" fill="#bfe0fb"/><rect x="2.2" y="7.6" width="6.6" height="0.9" fill="#bfe0fb"/></svg>
<div class="t" style="left:48.50px;top:256.90px;font-size:13px;line-height:16px;color:#323130;transform:scaleX(0.8470);transform-origin:0 0;">UserAccessAnalytics</div>
<div class="t" style="left:262.90px;top:256.90px;font-size:13px;line-height:16px;color:#323130;transform:scaleX(0.8800);transform-origin:0 0;">Azure table</div>
<div class="t" style="left:429.30px;top:256.90px;font-size:13px;line-height:16px;color:#323130;transform:scaleX(0.8720);transform-origin:0 0;">Analytics</div>
<div class="t" style="left:597.20px;top:256.90px;font-size:13px;line-height:16px;color:#323130;transform:scaleX(0.8730);transform-origin:0 0;">Workspace default (90 days)</div>
<div class="t" style="left:763.60px;top:256.90px;font-size:13px;line-height:16px;color:#323130;transform:scaleX(0.8500);transform-origin:0 0;">90 days</div>
<svg class="a" style="left:950px;top:261.3px;" width="16" height="5" viewBox="0 0 16 5"><circle cx="2" cy="2.5" r="1.5" fill="#484644"/><circle cx="8" cy="2.5" r="1.5" fill="#484644"/><circle cx="14" cy="2.5" r="1.5" fill="#484644"/></svg>
<div class="a" style="left:0px;top:309.0px;width:973px;height:1px;background:#edebe9;"></div>
<div class="a" style="left:5.1px;top:285.9px;width:16.8px;height:16px;background:#fff;border:1px solid #323130;border-radius:3px;box-sizing:border-box;"></div>
<svg class="a" style="left:30px;top:289.5px;" width="11" height="11" viewBox="0 0 11 11"><rect x="0.5" y="0.5" width="10" height="10.5" rx="1.5" fill="#3f9be8"/><rect x="2.2" y="3" width="6.6" height="0.9" fill="#bfe0fb"/><rect x="2.2" y="5.3" width="6.6" height="0.9" fill="#bfe0fb"/><rect x="2.2" y="7.6" width="6.6" height="0.9" fill="#bfe0fb"/></svg>
<div class="t" style="left:48.50px;top:286.90px;font-size:13px;line-height:16px;color:#323130;transform:scaleX(0.8464);transform-origin:0 0;">UserPeerAnalytics</div>
<div class="t" style="left:262.90px;top:286.90px;font-size:13px;line-height:16px;color:#323130;transform:scaleX(0.8800);transform-origin:0 0;">Azure table</div>
<div class="t" style="left:429.30px;top:286.90px;font-size:13px;line-height:16px;color:#323130;transform:scaleX(0.8720);transform-origin:0 0;">Analytics</div>
<div class="t" style="left:597.20px;top:286.90px;font-size:13px;line-height:16px;color:#323130;transform:scaleX(0.8730);transform-origin:0 0;">Workspace default (90 days)</div>
<div class="t" style="left:763.60px;top:286.90px;font-size:13px;line-height:16px;color:#323130;transform:scaleX(0.8500);transform-origin:0 0;">90 days</div>
<svg class="a" style="left:950px;top:291.3px;" width="16" height="5" viewBox="0 0 16 5"><circle cx="2" cy="2.5" r="1.5" fill="#484644"/><circle cx="8" cy="2.5" r="1.5" fill="#484644"/><circle cx="14" cy="2.5" r="1.5" fill="#484644"/></svg>
<div class="a" style="left:0px;top:339.0px;width:973px;height:1px;background:#edebe9;"></div>
<div class="a" style="left:5.1px;top:315.9px;width:16.8px;height:16px;background:#fff;border:1px solid #323130;border-radius:3px;box-sizing:border-box;"></div>
<svg class="a" style="left:30px;top:319.5px;" width="11" height="11" viewBox="0 0 11 11"><rect x="0.5" y="0.5" width="10" height="10.5" rx="1.5" fill="#3f9be8"/><rect x="2.2" y="3" width="6.6" height="0.9" fill="#bfe0fb"/><rect x="2.2" y="5.3" width="6.6" height="0.9" fill="#bfe0fb"/><rect x="2.2" y="7.6" width="6.6" height="0.9" fill="#bfe0fb"/></svg>
<div class="t" style="left:48.50px;top:316.90px;font-size:13px;line-height:16px;color:#323130;transform:scaleX(0.8600);transform-origin:0 0;">VMComputer</div>
<div class="t" style="left:262.90px;top:316.90px;font-size:13px;line-height:16px;color:#323130;transform:scaleX(0.8800);transform-origin:0 0;">Azure table</div>
<div class="t" style="left:429.30px;top:316.90px;font-size:13px;line-height:16px;color:#323130;transform:scaleX(0.8720);transform-origin:0 0;">Analytics</div>
<div class="t" style="left:597.20px;top:316.90px;font-size:13px;line-height:16px;color:#323130;transform:scaleX(0.8730);transform-origin:0 0;">Workspace default (90 days)</div>
<div class="t" style="left:763.60px;top:316.90px;font-size:13px;line-height:16px;color:#323130;transform:scaleX(0.8500);transform-origin:0 0;">90 days</div>
<svg class="a" style="left:950px;top:321.3px;" width="16" height="5" viewBox="0 0 16 5"><circle cx="2" cy="2.5" r="1.5" fill="#484644"/><circle cx="8" cy="2.5" r="1.5" fill="#484644"/><circle cx="14" cy="2.5" r="1.5" fill="#484644"/></svg>
<div class="a" style="left:973px;top:0px;width:15px;height:400px;background:#fafafa;"></div>
<svg class="a" style="left:975px;top:7px;" width="11" height="9" viewBox="0 0 11 9"><path d="M1 7.5 L5.5 1.5 L10 7.5 Z" fill="#8a8a8a" stroke="#8a8a8a" stroke-width="1.2" stroke-linejoin="round"/></svg>
</div>
<div class="a" style="left:258px;top:382px;width:988px;height:1px;background:#e1dfdd;"></div>
<svg class="a" style="left:778px;top:475px;shape-rendering:crispEdges;" width="12" height="19" viewBox="0 0 12 19"><rect x="0" y="0" width="1" height="1" fill="#000"/><rect x="0" y="1" width="1" height="1" fill="#000"/><rect x="1" y="1" width="1" height="1" fill="#000"/><rect x="0" y="2" width="1" height="1" fill="#000"/><rect x="1" y="2" width="1" height="1" fill="#fff"/><rect x="2" y="2" width="1" height="1" fill="#000"/><rect x="0" y="3" width="1" height="1" fill="#000"/><rect x="1" y="3" width="1" height="1" fill="#fff"/><rect x="2" y="3" width="1" height="1" fill="#fff"/><rect x="3" y="3" width="1" height="1" fill="#000"/><rect x="0" y="4" width="1" height="1" fill="#000"/><rect x="1" y="4" width="1" height="1" fill="#fff"/><rect x="2" y="4" width="1" height="1" fill="#fff"/><rect x="3" y="4" width="1" height="1" fill="#fff"/><rect x="4" y="4" width="1" height="1" fill="#000"/><rect x="0" y="5" width="1" height="1" fill="#000"/><rect x="1" y="5" width="1" height="1" fill="#fff"/><rect x="2" y="5" width="1" height="1" fill="#fff"/><rect x="3" y="5" width="1" height="1" fill="#fff"/><rect x="4" y="5" width="1" height="1" fill="#fff"/><rect x="5" y="5" width="1" height="1" fill="#000"/><rect x="0" y="6" width="1" height="1" fill="#000"/><rect x="1" y="6" width="1" height="1" fill="#fff"/><rect x="2" y="6" width="1" height="1" fill="#fff"/><rect x="3" y="6" width="1" height="1" fill="#fff"/><rect x="4" y="6" width="1" height="1" fill="#fff"/><rect x="5" y="6" width="1" height="1" fill="#fff"/><rect x="6" y="6" width="1" height="1" fill="#000"/><rect x="0" y="7" width="1" height="1" fill="#000"/><rect x="1" y="7" width="1" height="1" fill="#fff"/><rect x="2" y="7" width="1" height="1" fill="#fff"/><rect x="3" y="7" width="1" height="1" fill="#fff"/><rect x="4" y="7" width="1" height="1" fill="#fff"/><rect x="5" y="7" width="1" height="1" fill="#fff"/><rect x="6" y="7" width="1" height="1" fill="#fff"/><rect x="7" y="7" width="1" height="1" fill="#000"/><rect x="0" y="8" width="1" height="1" fill="#000"/><rect x="1" y="8" width="1" height="1" fill="#fff"/><rect x="2" y="8" width="1" height="1" fill="#fff"/><rect x="3" y="8" width="1" height="1" fill="#fff"/><rect x="4" y="8" width="1" height="1" fill="#fff"/><rect x="5" y="8" width="1" height="1" fill="#fff"/><rect x="6" y="8" width="1" height="1" fill="#fff"/><rect x="7" y="8" width="1" height="1" fill="#fff"/><rect x="8" y="8" width="1" height="1" fill="#000"/><rect x="0" y="9" width="1" height="1" fill="#000"/><rect x="1" y="9" width="1" height="1" fill="#fff"/><rect x="2" y="9" width="1" height="1" fill="#fff"/><rect x="3" y="9" width="1" height="1" fill="#fff"/><rect x="4" y="9" width="1" height="1" fill="#fff"/><rect x="5" y="9" width="1" height="1" fill="#fff"/><rect x="6" y="9" width="1" height="1" fill="#fff"/><rect x="7" y="9" width="1" height="1" fill="#fff"/><rect x="8" y="9" width="1" height="1" fill="#fff"/><rect x="9" y="9" width="1" height="1" fill="#000"/><rect x="0" y="10" width="1" height="1" fill="#000"/><rect x="1" y="10" width="1" height="1" fill="#fff"/><rect x="2" y="10" width="1" height="1" fill="#fff"/><rect x="3" y="10" width="1" height="1" fill="#fff"/><rect x="4" y="10" width="1" height="1" fill="#fff"/><rect x="5" y="10" width="1" height="1" fill="#fff"/><rect x="6" y="10" width="1" height="1" fill="#fff"/><rect x="7" y="10" width="1" height="1" fill="#fff"/><rect x="8" y="10" width="1" height="1" fill="#fff"/><rect x="9" y="10" width="1" height="1" fill="#fff"/><rect x="10" y="10" width="1" height="1" fill="#000"/><rect x="0" y="11" width="1" height="1" fill="#000"/><rect x="1" y="11" width="1" height="1" fill="#fff"/><rect x="2" y="11" width="1" height="1" fill="#fff"/><rect x="3" y="11" width="1" height="1" fill="#fff"/><rect x="4" y="11" width="1" height="1" fill="#fff"/><rect x="5" y="11" width="1" height="1" fill="#fff"/><rect x="6" y="11" width="1" height="1" fill="#fff"/><rect x="7" y="11" width="1" height="1" fill="#000"/><rect x="8" y="11" width="1" height="1" fill="#000"/><rect x="9" y="11" width="1" height="1" fill="#000"/><rect x="10" y="11" width="1" height="1" fill="#000"/><rect x="11" y="11" width="1" height="1" fill="#000"/><rect x="0" y="12" width="1" height="1" fill="#000"/><rect x="1" y="12" width="1" height="1" fill="#fff"/><rect x="2" y="12" width="1" height="1" fill="#fff"/><rect x="3" y="12" width="1" height="1" fill="#fff"/><rect x="4" y="12" width="1" height="1" fill="#000"/><rect x="5" y="12" width="1" height="1" fill="#fff"/><rect x="6" y="12" width="1" height="1" fill="#fff"/><rect x="7" y="12" width="1" height="1" fill="#000"/><rect x="0" y="13" width="1" height="1" fill="#000"/><rect x="1" y="13" width="1" height="1" fill="#fff"/><rect x="2" y="13" width="1" height="1" fill="#fff"/><rect x="3" y="13" width="1" height="1" fill="#000"/><rect x="4" y="13" width="1" height="1" fill="#000"/><rect x="5" y="13" width="1" height="1" fill="#fff"/><rect x="6" y="13" width="1" height="1" fill="#fff"/><rect x="7" y="13" width="1" height="1" fill="#000"/><rect x="0" y="14" width="1" height="1" fill="#000"/><rect x="1" y="14" width="1" height="1" fill="#fff"/><rect x="2" y="14" width="1" height="1" fill="#000"/><rect x="5" y="14" width="1" height="1" fill="#000"/><rect x="6" y="14" width="1" height="1" fill="#fff"/><rect x="7" y="14" width="1" height="1" fill="#fff"/><rect x="8" y="14" width="1" height="1" fill="#000"/><rect x="0" y="15" width="1" height="1" fill="#000"/><rect x="1" y="15" width="1" height="1" fill="#000"/><rect x="5" y="15" width="1" height="1" fill="#000"/><rect x="6" y="15" width="1" height="1" fill="#fff"/><rect x="7" y="15" width="1" height="1" fill="#fff"/><rect x="8" y="15" width="1" height="1" fill="#000"/><rect x="0" y="16" width="1" height="1" fill="#000"/><rect x="6" y="16" width="1" height="1" fill="#000"/><rect x="7" y="16" width="1" height="1" fill="#fff"/><rect x="8" y="16" width="1" height="1" fill="#fff"/><rect x="9" y="16" width="1" height="1" fill="#000"/><rect x="6" y="17" width="1" height="1" fill="#000"/><rect x="7" y="17" width="1" height="1" fill="#fff"/><rect x="8" y="17" width="1" height="1" fill="#fff"/><rect x="9" y="17" width="1" height="1" fill="#000"/><rect x="7" y="18" width="1" height="1" fill="#000"/><rect x="8" y="18" width="1" height="1" fill="#000"/></svg>
<div class="a" style="left:250.5px;top:450.2px;width:993px;height:35.6px;background:transparent;border:4.5px solid #ef3a3e;border-radius:6px;box-sizing:border-box;"></div>
<div class="a" style="left:1265px;top:120px;width:15px;height:573px;background:#fafafa;"></div>
<svg class="a" style="left:1267px;top:127px;" width="11" height="9" viewBox="0 0 11 9"><path d="M1 7.5 L5.5 1.5 L10 7.5 Z" fill="#8a8a8a" stroke="#8a8a8a" stroke-width="1.2" stroke-linejoin="round"/></svg>
<div class="a" style="left:1268px;top:143px;width:9px;height:465px;background:#8a8a8a;border-radius:4.5px;"></div>
<svg class="a" style="left:1267px;top:677px;" width="11" height="9" viewBox="0 0 11 9"><path d="M1 1.5 L5.5 7.5 L10 1.5 Z" fill="#8a8a8a" stroke="#8a8a8a" stroke-width="1.2" stroke-linejoin="round"/></svg>
</body></html>
